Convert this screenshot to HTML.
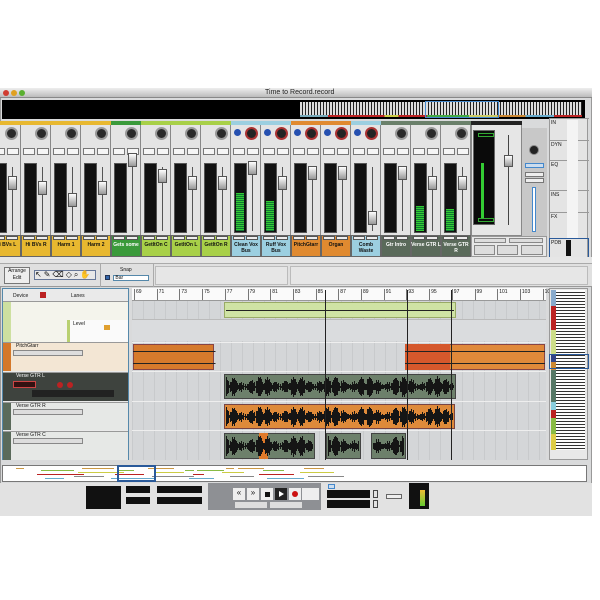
<!DOCTYPE html>
<html><head><meta charset="utf-8">
<style>
*{box-sizing:border-box;margin:0;padding:0}
body{width:600px;height:600px;background:#fff;position:relative;overflow:hidden;font-family:"Liberation Sans",sans-serif;font-size:5px;color:#111}
.a{position:absolute}
</style></head><body>
<div class="a" style="left:0;top:88px;width:592px;height:428px;background:#d9dadb;border:1px solid #999"></div>
<div class="a" style="left:0;top:88px;width:592px;height:10px;background:linear-gradient(#eee,#bcbcbc);border-bottom:1px solid #888"></div>
<div class="a" style="left:3px;top:90px;width:6px;height:6px;border-radius:50%;background:#d03c30"></div>
<div class="a" style="left:11px;top:90px;width:6px;height:6px;border-radius:50%;background:#e0a020"></div>
<div class="a" style="left:19px;top:90px;width:6px;height:6px;border-radius:50%;background:#5ab030"></div>
<div class="a" style="left:265px;top:89px;font-size:7px;color:#222">Time to Record.record</div>
<div class="a" style="left:2px;top:100px;width:583px;height:19px;background:#000"></div>
<div class="a" style="left:300px;top:102px;width:282px;height:13px;background:repeating-linear-gradient(90deg,#ddd 0 2px,#222 2px 3px)"></div>
<div class="a" style="left:300px;top:115px;width:282px;height:2px;background:linear-gradient(90deg,#7ab 0 10%,#b22 10% 30%,#cc4 30% 35%,#b22 35% 45%,#4a4 45% 60%,#cc6 60% 70%,#c83 70% 80%,#6ac 80% 90%,#b22 90%)"></div>
<div class="a" style="left:425px;top:101px;width:74px;height:17px;border:1px solid #48c"></div>
<div id="mix"></div>
<div class="a" style="left:471px;top:121px;width:51px;height:115px;background:#e6e6e6;border:1px solid #888"></div>
<div class="a" style="left:471px;top:121px;width:51px;height:4px;background:#222"></div>
<div class="a" style="left:473px;top:130px;width:22px;height:95px;background:#0a0a0a;border:1px solid #666"></div>
<div class="a" style="left:481px;top:163px;width:3px;height:55px;background:#3c3"></div>
<div class="a" style="left:478px;top:133px;width:16px;height:4px;border:1px solid #3a3"></div>
<div class="a" style="left:478px;top:218px;width:16px;height:4px;border:1px solid #3a3"></div>
<div class="a" style="left:508px;top:135px;width:1px;height:90px;background:#444"></div>
<div class="a" style="left:504px;top:155px;width:9px;height:12px;background:linear-gradient(#fff,#999);border:1px solid #555"></div>
<div class="a" style="left:522px;top:128px;width:25px;height:108px;background:#c8c8c8"></div>
<div class="a" style="left:529px;top:145px;width:10px;height:10px;border-radius:50%;background:#222;border:1px solid #888"></div>
<div class="a" style="left:525px;top:163px;width:19px;height:5px;background:#cde;border:1px solid #48c"></div>
<div class="a" style="left:525px;top:172px;width:19px;height:5px;background:#eee;border:1px solid #777"></div>
<div class="a" style="left:525px;top:178px;width:19px;height:5px;background:#eee;border:1px solid #777"></div>
<div class="a" style="left:532px;top:187px;width:4px;height:45px;background:#fff;border:1px solid #48c"></div>
<div class="a" style="left:471px;top:236px;width:76px;height:21px;background:#e8e8e8;border:1px solid #999"></div>
<div class="a" style="left:474px;top:238px;width:32px;height:5px;background:#ddd;border:1px solid #888"></div>
<div class="a" style="left:509px;top:238px;width:34px;height:5px;background:#ddd;border:1px solid #888"></div>
<div class="a" style="left:474px;top:245px;width:21px;height:10px;background:#ddd;border:1px solid #888"></div>
<div class="a" style="left:497px;top:245px;width:21px;height:10px;background:#ddd;border:1px solid #888"></div>
<div class="a" style="left:521px;top:245px;width:22px;height:10px;background:#ddd;border:1px solid #888"></div>
<div class="a" style="left:549px;top:118px;width:39px;height:140px;background:#e4e4e4;border:1px solid #999"></div>
<div id="rp"></div>
<div class="a" style="left:549px;top:238px;width:40px;height:20px;border:1px solid #2a5a9a"></div>
<div class="a" style="left:566px;top:240px;width:5px;height:16px;background:#111"></div>
<div class="a" style="left:0;top:257px;width:592px;height:6px;background:#e6e6e6"></div>
<div class="a" style="left:0;top:263px;width:592px;height:24px;background:#e0e0e0;border-top:1px solid #aaa;border-bottom:1px solid #999"></div>
<div class="a" style="left:4px;top:267px;width:26px;height:17px;background:#eee;border:1px solid #777;font-size:5px;text-align:center;line-height:7px">Arrange<br>Edit</div>
<div class="a" style="left:34px;top:270px;width:62px;height:10px;background:#e8e8e8;border:1px solid #679;font-size:8px;line-height:8px;letter-spacing:2px">↖✎⌫◇⌕✋</div>
<div class="a" style="left:100px;top:263px;width:1px;height:24px;background:#aaa"></div>
<div class="a" style="left:153px;top:263px;width:1px;height:24px;background:#aaa"></div>
<div class="a" style="left:120px;top:267px;font-size:5px">Snap</div>
<div class="a" style="left:105px;top:275px;width:5px;height:5px;background:#36a;border:1px solid #235"></div>
<div class="a" style="left:113px;top:275px;width:36px;height:6px;background:#fff;border:1px solid #58a;font-size:5px;line-height:5px">&nbsp;Bar</div>
<div class="a" style="left:155px;top:266px;width:133px;height:19px;background:#e6e6e6;border:1px solid #bbb"></div>
<div class="a" style="left:290px;top:266px;width:298px;height:19px;background:#e6e6e6;border:1px solid #bbb"></div>
<div class="a" style="left:2px;top:288px;width:127px;height:172px;background:#eaeaea;border:1px solid #58a"></div>
<div class="a" style="left:13px;top:293px;font-size:5px">Device</div>
<div class="a" style="left:40px;top:292px;width:6px;height:6px;background:#b22"></div>
<div class="a" style="left:71px;top:293px;font-size:5px">Lanes</div>
<div class="a" style="left:3px;top:301px;width:125px;height:41px;background:#f4f4ec"></div>
<div class="a" style="left:3px;top:301px;width:8px;height:41px;background:#cde0a0"></div>
<div class="a" style="left:67px;top:320px;width:61px;height:22px;background:#fafafa;border-left:3px solid #b8d070"></div>
<div class="a" style="left:73px;top:321px;font-size:5px">Level</div>
<div class="a" style="left:104px;top:325px;width:6px;height:5px;background:#e0a030"></div>
<div class="a" style="left:3px;top:342px;width:125px;height:29px;background:#f3e6d4"></div>
<div class="a" style="left:3px;top:342px;width:8px;height:29px;background:#d4782a"></div>
<div class="a" style="left:16px;top:343px;font-size:5px">PitchGtarr</div>
<div class="a" style="left:3px;top:372px;width:125px;height:29px;background:#3e433e"></div>
<div class="a" style="left:16px;top:373px;font-size:5px;color:#fff">Verse GTR L</div>
<div class="a" style="left:13px;top:381px;width:23px;height:7px;background:#311;border:1px solid #c44"></div>
<div class="a" style="left:57px;top:382px;width:6px;height:6px;border-radius:50%;background:#b22"></div>
<div class="a" style="left:67px;top:382px;width:6px;height:6px;border-radius:50%;background:#b22"></div>
<div class="a" style="left:32px;top:390px;width:82px;height:7px;background:#222"></div>
<div class="a" style="left:3px;top:402px;width:125px;height:28px;background:#e6e8e6"></div>
<div class="a" style="left:3px;top:402px;width:8px;height:28px;background:#5a6a5a"></div>
<div class="a" style="left:16px;top:403px;font-size:5px">Verse GTR R</div>
<div class="a" style="left:3px;top:431px;width:125px;height:29px;background:#e6e8e6"></div>
<div class="a" style="left:3px;top:431px;width:8px;height:29px;background:#5a6a5a"></div>
<div class="a" style="left:16px;top:432px;font-size:5px">Verse GTR C</div>
<div id="th"></div>
<div class="a" style="left:132px;top:288px;width:414px;height:172px;background:#d0d2d4"></div>
<div class="a" style="left:132px;top:288px;width:414px;height:13px;background:#fafafa;border-bottom:1px solid #999"></div>
<div id="ruler"></div>
<div class="a" style="left:132px;top:301px;width:414px;height:159px;background:repeating-linear-gradient(90deg,#c8cacc 0 1px,#d4d6d8 1px 11px)"></div>
<div class="a" style="left:132px;top:319px;width:414px;height:22px;background:#dadcde;border-top:1px solid #bbb"></div>
<div class="a" style="left:132px;top:342px;width:414px;height:1px;background:#eee"></div>
<div class="a" style="left:132px;top:371px;width:414px;height:1px;background:#eee"></div>
<div class="a" style="left:132px;top:401px;width:414px;height:1px;background:#eee"></div>
<div class="a" style="left:132px;top:430px;width:414px;height:1px;background:#eee"></div>
<div class="a" style="left:224px;top:302px;width:232px;height:16px;background:#cfe3a4;border:1px solid #9a6"></div>
<div class="a" style="left:226px;top:310px;width:228px;height:1px;background:#222"></div>
<div class="a" style="left:133px;top:344px;width:81px;height:26px;background:#d67a2c;border:1px solid #844"></div>
<div class="a" style="left:405px;top:344px;width:140px;height:26px;background:#e0893a;border:1px solid #844"></div>
<div class="a" style="left:405px;top:344px;width:45px;height:26px;background:#d5582c"></div>
<div class="a" style="left:133px;top:351px;width:412px;height:1px;background:linear-gradient(90deg,#222 0 20%,transparent 20% 66%,#222 66%)"></div>
<div class="a" style="left:133px;top:363px;width:412px;height:1px;background:linear-gradient(90deg,#222 0 20%,transparent 20% 66%,#222 66%)"></div>
<div class="a" style="left:224px;top:374px;width:232px;height:25px;background:#6d806b;border:1px solid #444"></div>
<div class="a" style="left:224px;top:404px;width:231px;height:25px;background:#de8a3a;border:1px solid #744"></div>
<div class="a" style="left:224px;top:433px;width:91px;height:26px;background:#6d806b;border:1px solid #444"></div>
<div class="a" style="left:259px;top:433px;width:9px;height:26px;background:#e07a2a"></div>
<div class="a" style="left:326px;top:433px;width:35px;height:26px;background:#6d806b;border:1px solid #444"></div>
<div class="a" style="left:371px;top:433px;width:35px;height:26px;background:#6d806b;border:1px solid #444"></div>
<div id="wf"></div>
<div class="a" style="left:325px;top:290px;width:1px;height:170px;background:#222"></div>
<div class="a" style="left:407px;top:290px;width:1px;height:170px;background:#222"></div>
<div class="a" style="left:451px;top:290px;width:1px;height:170px;background:#222"></div>
<div class="a" style="left:549px;top:288px;width:39px;height:172px;background:#e8e8e8;border:1px solid #999"></div>
<div class="a" style="left:551px;top:290px;width:34px;height:160px;background:repeating-linear-gradient(#fff 0 2px,#333 2px 3px)"></div>
<div class="a" style="left:551px;top:290px;width:5px;height:160px;background:linear-gradient(#8ac 0 10%,#b22 10% 25%,#cd8 25% 40%,#348 40% 45%,#c83 45% 50%,#576 50% 70%,#8cd 70% 75%,#b22 75% 80%,#8b4 80% 90%,#dc4 90%)"></div>
<div class="a" style="left:549px;top:354px;width:40px;height:15px;border:1px solid #2a5a9a"></div>
<div class="a" style="left:2px;top:465px;width:585px;height:17px;background:#fff;border:1px solid #777"></div>
<div id="ov"></div>
<div class="a" style="left:117px;top:465px;width:39px;height:17px;border:2px solid #2a5a9a"></div>
<div class="a" style="left:0;top:483px;width:592px;height:33px;background:#e2e2e2"></div>
<div class="a" style="left:86px;top:486px;width:35px;height:23px;background:#111"></div>
<div class="a" style="left:126px;top:486px;width:24px;height:7px;background:#111"></div>
<div class="a" style="left:126px;top:497px;width:24px;height:7px;background:#111"></div>
<div class="a" style="left:157px;top:486px;width:45px;height:7px;background:#111"></div>
<div class="a" style="left:157px;top:497px;width:45px;height:7px;background:#111"></div>
<div class="a" style="left:208px;top:483px;width:113px;height:27px;background:#8e9094"></div>
<div class="a" style="left:233px;top:488px;width:12px;height:12px;background:#eee;font-size:8px;text-align:center">«</div>
<div class="a" style="left:247px;top:488px;width:12px;height:12px;background:#eee;font-size:8px;text-align:center">»</div>
<div class="a" style="left:261px;top:488px;width:12px;height:12px;background:#eee"></div>
<div class="a" style="left:265px;top:492px;width:5px;height:5px;background:#111"></div>
<div class="a" style="left:275px;top:488px;width:12px;height:12px;background:#222"></div>
<div class="a" style="left:279px;top:491px;width:0;height:0;border-left:5px solid #fff;border-top:3px solid transparent;border-bottom:3px solid transparent"></div>
<div class="a" style="left:289px;top:488px;width:12px;height:12px;background:#eee"></div>
<div class="a" style="left:292px;top:491px;width:6px;height:6px;border-radius:50%;background:#c11"></div>
<div class="a" style="left:302px;top:488px;width:17px;height:12px;background:#eee"></div>
<div class="a" style="left:235px;top:502px;width:32px;height:6px;background:#ddd"></div>
<div class="a" style="left:270px;top:502px;width:32px;height:6px;background:#ddd"></div>
<div class="a" style="left:328px;top:484px;width:7px;height:5px;background:#cde;border:1px solid #48c"></div>
<div class="a" style="left:327px;top:490px;width:43px;height:8px;background:#111"></div>
<div class="a" style="left:327px;top:500px;width:43px;height:8px;background:#111"></div>
<div class="a" style="left:373px;top:490px;width:5px;height:8px;border:1px solid #444"></div>
<div class="a" style="left:373px;top:500px;width:5px;height:8px;border:1px solid #444"></div>
<div class="a" style="left:386px;top:494px;width:16px;height:5px;background:#eee;border:1px solid #666"></div>
<div class="a" style="left:409px;top:483px;width:20px;height:26px;background:#111"></div>
<div class="a" style="left:420px;top:490px;width:5px;height:16px;background:linear-gradient(#eb3,#6c3)"></div>
<script>
var h='',cols=['#e8b830','#e8b830','#e8b830','#e8b830','#3a9a3a','#a8d048','#a8d048','#a8d048','#9ccfe0','#9ccfe0','#e08a30','#e08a30','#9ccfe0','#6a806a','#6a806a','#6a806a'];
var names=['Hi BVs L','Hi BVs R','Harm 1','Harm 2','Gets some','GetItOn C','GetItOn L','GetItOn R','Clean Vox Bus','Ruff Vox Bus','PitchGtarr','Organ','Comb Waste','Gtr Intro','Verse GTR L','Verse GTR R'];
var fy=[55,60,72,60,32,48,55,55,40,55,45,45,90,45,55,55];
var lv=[0,0,0,0,0,0,0,0,38,30,0,0,0,0,25,22];
for(var i=0;i<16;i++){var x=-9+30*i,c=cols[i];
h+='<div class="a" style="left:'+x+'px;top:121px;width:30px;height:136px;background:#e4e4e4;border-right:1px solid #888"></div>';
h+='<div class="a" style="left:'+x+'px;top:121px;width:30px;height:4px;background:'+c+'"></div>';
if(i>=8&&i<=12){h+='<div class="a" style="left:'+(x+3)+'px;top:129px;width:7px;height:7px;border-radius:50%;background:#2650b0"></div><div class="a" style="left:'+(x+14)+'px;top:127px;width:13px;height:13px;border-radius:50%;background:#222;border:2px solid #a33"></div>';}
else h+='<div class="a" style="left:'+(x+14)+'px;top:127px;width:13px;height:13px;border-radius:50%;background:#2a2a2a;border:2px solid #999"></div>';
h+='<div class="a" style="left:'+(x+2)+'px;top:148px;width:12px;height:7px;background:#f6f6f6;border:1px solid #777"></div><div class="a" style="left:'+(x+16)+'px;top:148px;width:12px;height:7px;background:#f6f6f6;border:1px solid #777"></div>';
h+='<div class="a" style="left:'+(x+3)+'px;top:163px;width:13px;height:70px;background:#111;border:1px solid #555"></div>';
if(lv[i])h+='<div class="a" style="left:'+(x+5)+'px;top:'+(231-lv[i])+'px;width:8px;height:'+lv[i]+'px;background:repeating-linear-gradient(#3c3 0 1px,#173 1px 2px)"></div>';
h+='<div class="a" style="left:'+(x+21)+'px;top:167px;width:1px;height:64px;background:#555"></div>';
h+='<div class="a" style="left:'+(x+17)+'px;top:'+(121+fy[i])+'px;width:9px;height:14px;background:linear-gradient(#fff,#999);border:1px solid #555"></div>';
var lc=(i>=13)?'#5a6a5a':c;
h+='<div class="a" style="left:'+x+'px;top:235px;width:30px;height:22px;background:'+lc+';border:1px solid #666"></div>';
h+='<div class="a" style="left:'+(x+2)+'px;top:236px;width:12px;height:4px;background:#eee;border:1px solid #555"></div><div class="a" style="left:'+(x+15)+'px;top:236px;width:12px;height:4px;background:#eee;border:1px solid #555"></div>';
h+='<div class="a" style="left:'+x+'px;top:242px;width:30px;text-align:center;font-size:5px;line-height:6px;font-weight:bold;color:'+(i>=13||i==4?'#fff':'#111')+'">'+names[i]+'</div>';}
document.getElementById('mix').innerHTML=h;
var r='',labs=['IN','DYN','EQ','INS','FX','PDB'],ys=[118,140,160,190,212,238];
for(var j=0;j<6;j++){r+='<div class="a" style="left:551px;top:'+(ys[j]+2)+'px;font-size:5px">'+labs[j]+'</div><div class="a" style="left:549px;top:'+ys[j]+'px;width:40px;height:1px;background:#999"></div>';}
r+='<div class="a" style="left:567px;top:120px;width:11px;height:118px;background:#f4f4f4"></div>';
document.getElementById('rp').innerHTML=r;
var ru='',n=69;for(var x=134;x<545;x+=22.7){ru+='<div class="a" style="left:'+x+'px;top:289px;font-size:5px;border-left:1px solid #777;padding-left:1px;height:11px">'+n+'</div>';n+=2;}
document.getElementById('ruler').innerHTML=ru;
var w='';var rows=[[374,25,224,456],[404,25,224,455],[433,26,224,315],[433,26,326,361],[433,26,371,406]];
rows.forEach(function(rw){for(var x=rw[2]+2;x<rw[3]-2;x++){var a=Math.abs(Math.sin(x*0.37)*Math.sin(x*0.09))*0.7+Math.abs(Math.sin(x*1.7))*0.25;var hh=Math.max(1,Math.round(a*rw[1]*0.9));w+='<div class="a" style="left:'+x+'px;top:'+(rw[0]+rw[1]/2-hh/2)+'px;width:1px;height:'+hh+'px;background:#151515"></div>';}});
document.getElementById('wf').innerHTML=w;
var t='';[301,342,372,402,431].forEach(function(y){t+='<div class="a" style="left:3px;top:'+y+'px;width:125px;height:1px;background:#999"></div>';});
[350,409,438].forEach(function(y){t+='<div class="a" style="left:13px;top:'+y+'px;width:70px;height:6px;background:#ddd;border:1px solid #888"></div>';});
document.getElementById('th').innerHTML=t;
var o='',oc=['#c94','#8b4','#cc4','#b22','#888','#6ac'];
for(var k=0;k<40;k++){var x=16+((k*37)%300),y=468+(k%6)*2,ww=8+(k*13)%30;o+='<div class="a" style="left:'+x+'px;top:'+y+'px;width:'+ww+'px;height:1px;background:'+oc[k%6]+'"></div>';}
document.getElementById('ov').innerHTML=o;
</script>
</body></html>
